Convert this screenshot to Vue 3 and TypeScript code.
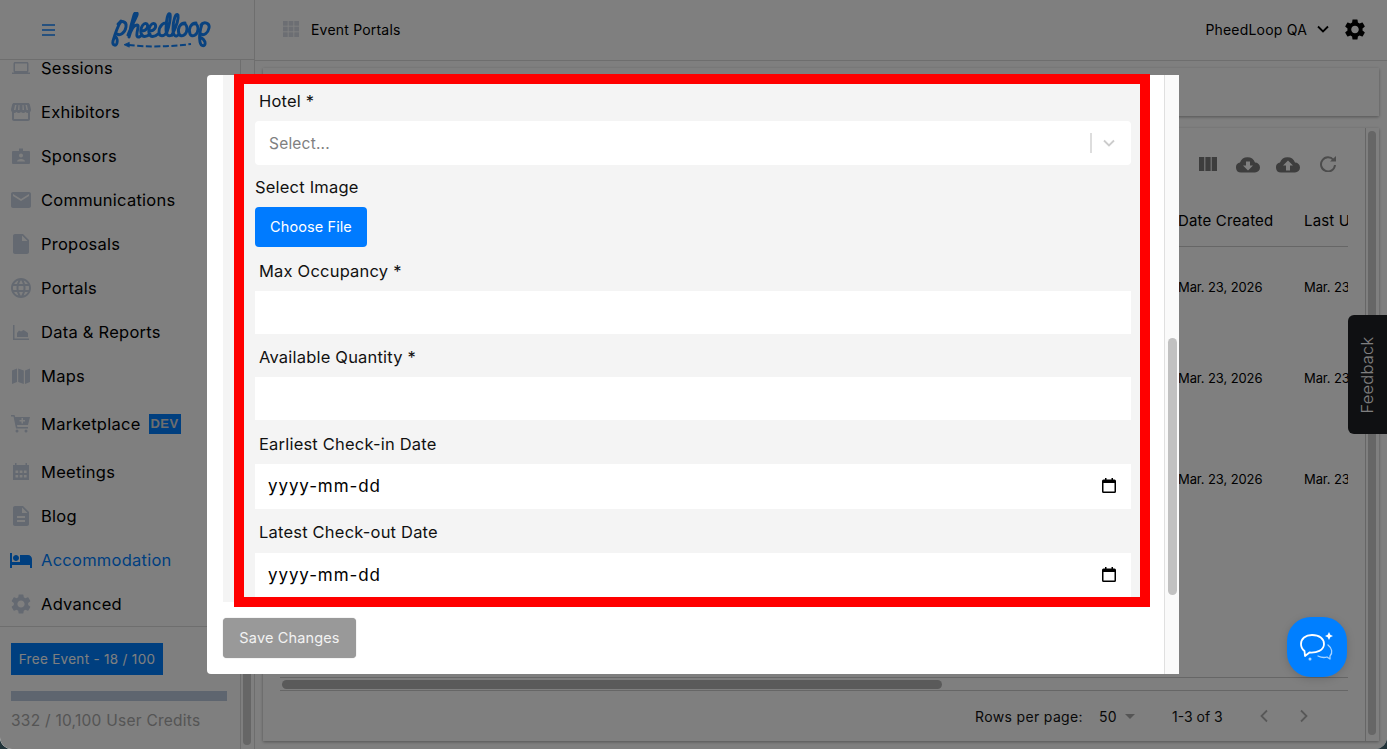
<script setup lang="ts">
interface NavItem { label: string; icon: string; vb?: string; cls?: string; active?: boolean; dev?: boolean; }
const M = '0 0 24 24';
const nav: NavItem[] = [
  { label: 'Sessions', vb: '-4 -4 32 32', icon: 'M20 18c1.100 0 1.990-.9 1.990-2L22 6c0-1.100-.9-2-2-2H4c-1.100 0-2 .9-2 2v10c0 1.100.9 2 2 2H0v2h24v-2h-4zM4 6h16v10H4V6z' },
  { label: 'Exhibitors', vb: M, icon: 'M21.900 8.890l-1.050-4.370c-.22-.9-1-1.520-1.910-1.520H5.050c-.9 0-1.690.63-1.900 1.520L2.100 8.890c-.24 1.020-.02 2.060.62 2.880.08.11.19.19.28.29V19c0 1.100.9 2 2 2h14c1.100 0 2-.9 2-2v-6.940c.09-.09.2-.18.28-.28.64-.82.87-1.870.62-2.890zM5 19v-6.030c.08.01.15.03.22.03.87 0 1.660-.36 2.240-.95.6.6 1.400.95 2.310.95.87 0 1.650-.36 2.230-.93.59.57 1.390.93 2.290.93.84 0 1.640-.35 2.240-.95.58.59 1.370.95 2.240.95.08 0 .15-.02.23-.03V19H5zM6 5L5 10h1.500L7.500 5zM9.500 5L9 10h1.500V5zM13.500 5v5H15l-.5-5zM16.500 5l1 5H19l-1-5z' },
  { label: 'Sponsors', icon: 'M2 5h6V2.500h4V5h6a1 1 0 0 1 1 1v11a1 1 0 0 1-1 1H2a1 1 0 0 1-1-1V6a1 1 0 0 1 1-1z M10 7.500a2 2 0 1 0 0 4 2 2 0 0 0 0-4z M6 15.500h8c0-3.500-8-3.500-8 0z' },
  { label: 'Communications', vb: M, icon: 'M20 4H4c-1.100 0-1.990.9-1.990 2L2 18c0 1.100.9 2 2 2h16c1.100 0 2-.9 2-2V6c0-1.100-.9-2-2-2zm0 4l-8 5-8-5V6l8 5 8-5v2z' },
  { label: 'Proposals', vb: M, icon: 'M6 2c-1.100 0-1.990.9-1.990 2L4 20c0 1.100.89 2 1.990 2H18c1.100 0 2-.9 2-2V8l-6-6H6zm7 7V3.500L18.500 9H13z' },
  { label: 'Portals', vb: M, icon: 'M11.990 2C6.470 2 2 6.480 2 12s4.470 10 9.990 10C17.520 22 22 17.520 22 12S17.520 2 11.990 2zm6.930 6h-2.950c-.32-1.250-.78-2.450-1.380-3.560 1.840.63 3.370 1.910 4.330 3.560zM12 4.040c.83 1.200 1.480 2.530 1.910 3.960h-3.820c.43-1.430 1.080-2.760 1.910-3.960zM4.260 14C4.100 13.360 4 12.690 4 12s.1-1.360.26-2h3.380c-.08.66-.14 1.320-.14 2 0 .68.06 1.340.14 2H4.260zm.82 2h2.950c.32 1.250.78 2.450 1.380 3.560-1.840-.63-3.370-1.900-4.330-3.560zm2.950-8H5.080c.96-1.660 2.490-2.930 4.330-3.560C8.810 5.550 8.350 6.750 8.030 8zM12 19.960c-.83-1.200-1.480-2.530-1.910-3.960h3.820c-.43 1.430-1.080 2.760-1.910 3.960zM14.340 14H9.660c-.09-.66-.16-1.320-.16-2 0-.68.07-1.350.16-2h4.680c.09.65.16 1.320.16 2 0 .68-.07 1.340-.16 2zm.25 5.560c.6-1.110 1.060-2.310 1.380-3.560h2.950c-.96 1.650-2.490 2.930-4.330 3.560zM16.360 14c.08-.66.14-1.320.14-2 0-.68-.06-1.340-.14-2h3.380c.16.64.26 1.310.26 2s-.1 1.360-.26 2h-3.380z' },
  { label: 'Data & Reports', icon: 'M2 3h1.500v13.500H18V18H2z M6 15v-4l2-2.500 2 1 2.500-1.500L15 9.500l2 1.500v4z' },
  { label: 'Maps', icon: 'M1 4.500l5-2v13.500l-5 2z M7.200 2.500l5.600 2V18l-5.600-2z M14 4.500l5-2V16l-5 2z' },
  { label: 'Marketplace', icon: 'M0 1h3.500l.7 2H19l-2 8H6l.4 2H17v1.500H5L2.500 2.500H0z M6 15.500a1.500 1.500 0 1 0 0 3 1.500 1.500 0 0 0 0-3z M15 15.500a1.500 1.500 0 1 0 0 3 1.500 1.500 0 0 0 0-3z M10.500 4v2h-2v1.500h2v2H12v-2h2V6h-2V4z', dev: true, cls: 'gap-a' },
  { label: 'Meetings', icon: 'M4 1h1.500v2h9V1H16v2h2v15H2V3h2z M4.500 8.500v2.500h2.700V8.500z M8.700 8.500v2.500h2.700V8.500z M12.900 8.500v2.500h2.700V8.500z M4.500 13v2.500h2.700V13z M8.700 13v2.500h2.700V13z M12.900 13v2.500h2.700V13z', cls: 'gap-b' },
  { label: 'Blog', vb: M, icon: 'M14 2H6c-1.100 0-1.990.9-1.990 2L4 20c0 1.100.89 2 1.990 2H18c1.100 0 2-.9 2-2V8l-6-6zm2 16H8v-2h8v2zm0-4H8v-2h8v2zm-3-5V3.500L18.500 9H13z' },
  { label: 'Accommodation', vb: M, icon: 'M7 13c1.660 0 3-1.340 3-3S8.660 7 7 7s-3 1.340-3 3 1.340 3 3 3zm12-6h-8v7H3V5H1v15h2v-3h18v3h2v-9c0-2.210-1.790-4-4-4z', active: true },
  { label: 'Advanced', vb: M, icon: 'M19.140 12.940c.04-.3.06-.61.06-.94 0-.32-.02-.64-.07-.94l2.030-1.580a.49.49 0 0 0 .12-.61l-1.920-3.320a.488.488 0 0 0-.59-.22l-2.390.96c-.5-.38-1.030-.7-1.620-.94l-.36-2.540a.484.484 0 0 0-.48-.41h-3.840c-.24 0-.43.17-.47.41l-.36 2.540c-.59.24-1.130.57-1.620.94l-2.390-.96c-.22-.08-.47 0-.59.22L2.740 8.870c-.12.21-.08.47.12.61l2.030 1.580c-.05.3-.09.63-.09.94s.02.64.07.94l-2.030 1.580a.49.49 0 0 0-.12.61l1.920 3.320c.12.22.37.29.59.22l2.390-.96c.5.38 1.030.7 1.620.94l.36 2.540c.05.24.24.41.48.41h3.840c.24 0 .44-.17.47-.41l.36-2.540c.59-.24 1.130-.56 1.620-.94l2.390.96c.22.08.47 0 .59-.22l1.920-3.320c.12-.22.07-.47-.12-.61l-2.010-1.580zM12 15.600c-1.980 0-3.600-1.620-3.600-3.600s1.620-3.600 3.600-3.600 3.600 1.620 3.600 3.600-1.620 3.600-3.600 3.600z' },
];
const gear = nav[nav.length - 1].icon;
const rows = ['row-a', 'row-b', 'row-c'];
const fields = ['Max Occupancy *', 'Available Quantity *'];
const dates = ['Earliest Check-in Date', 'Latest Check-out Date'];
</script>

<template>
  <div class="page">
    <aside class="side">
      <div class="brand">
        <svg class="burger" viewBox="0 0 13 12" width="13" height="12"><path d="M0 1h13M0 6h13M0 11h13" stroke="#1284ff" stroke-width="1.500" /></svg>
        <svg class="logo" viewBox="0 0 102 36" width="102" height="36" fill="none" stroke="#1284ff" stroke-linecap="round" stroke-linejoin="round">
          <g stroke-width="2.900">
            <path d="M12 9C9 14 6 22 4 29c-1 4 3 6 4 2 1-4-1-6-2-7" />
            <path d="M9 12c3-4 9-3 8 3-1 6-6 9-9 7" />
            <path d="M19 23c3-8 8-17 9-20 1-3-2-3-3 0-2 6-4 14-5 22 2-7 5-12 8-12 3 0-1 7 0 11 1 2 3 1 5-1" />
            <path d="M33 19c4 0 7-4 5-7-3-2-7 3-6 9 1 5 6 4 9 1" />
            <path d="M41 19c4 0 7-4 5-7-3-2-7 3-6 9 1 5 6 4 9 1" />
            <path d="M59 12c-4-3-9 2-9 8 0 5 5 5 8 0 2-5 4-15 3-18-2-2-4 6-4 15 0 6 2 8 6 6" />
            <path d="M63 23c3-6 7-16 6-20-2-3-5 5-5 14 0 7 3 9 6 5" />
            <path d="M76 11c-5 0-8 6-6 11 2 4 8 1 8-5 0-4-2-6-4-5" />
            <path d="M87 11c-5 0-8 6-6 11 2 4 8 1 8-5 0-4-2-6-4-5" />
            <path d="M93 12c-2 6-3 13-2 18 1 5 6 5 5 0-1-3-3-4-5-5" />
            <path d="M92 13c3-4 9-2 8 3-1 5-5 8-8 6" />
          </g>
          <path d="M20 33c16 2 40 2 62-1" stroke-width="2" stroke-dasharray="6 2.500" stroke-linecap="butt" />
          <path d="M20 30.500l-5 2.200 5 2.300z" fill="#1284ff" stroke-width=".8" />
        </svg>
      </div>
      <div class="side-body">
        <div class="side-col">
          <div class="nav-wrap">
            <nav class="nav">
              <a v-for="n in nav" :key="n.label" class="nav-item" :class="[n.cls, { active: n.active }]">
                <svg class="nav-icon" :viewBox="n.vb || '-2 -2 24 24'" width="24" height="24"><path :d="n.icon" fill-rule="evenodd" /></svg>
                <span class="nav-label">{{ n.label }}</span>
                <span v-if="n.dev" class="dev">DEV</span>
              </a>
            </nav>
          </div>
          <div class="plan">
            <span class="plan-badge">Free Event - 18 / 100</span>
            <div class="plan-bar"></div>
            <div class="plan-credits">332 / 10,100 User Credits</div>
          </div>
        </div>
        <div class="track"><i class="track-thumb"></i></div>
      </div>
    </aside>

    <div class="main">
      <header class="top">
        <svg class="grid-ico" viewBox="0 0 17 17" width="16" height="16"><g fill="#d8dde6"><rect v-for="i in 9" :key="i" :x="((i-1)%3)*6" :y="Math.floor((i-1)/3)*6" width="5" height="5" /></g></svg>
        <span class="crumb">Event Portals</span>
        <span class="org">PheedLoop QA</span>
        <svg class="chev" viewBox="0 0 12 8" width="12" height="8"><path d="M1 1.500l5 5 5-5" fill="none" stroke="#000" stroke-width="1.800" /></svg>
        <svg class="gear" viewBox="2.500 2 19 20" width="20" height="21"><path fill-rule="evenodd" :d="gear" /></svg>
      </header>
      <div class="content">
        <div class="card-top"></div>
        <div class="card-wrap">
          <section class="card">
            <div class="tools">
              <svg viewBox="0 0 18 14" width="18" height="14"><path d="M0 0h5.300v14H0zM6.350 0h5.300v14h-5.300zM12.700 0H18v14h-5.300z" fill="#7a7a7a" /></svg>
              <svg class="t2" viewBox="0 0 24 16" width="24" height="17"><path fill="#7a7a7a" fill-rule="evenodd" d="M5 16a5 5 0 0 1-1-9.900A8 8 0 0 1 19 6a5 5 0 0 1 0 10z M10 5v4H7l5 5 5-5h-3V5z" /></svg>
              <svg class="t3" viewBox="0 0 24 16" width="24" height="17"><path fill="#7a7a7a" fill-rule="evenodd" d="M5 16a5 5 0 0 1-1-9.900A8 8 0 0 1 19 6a5 5 0 0 1 0 10z M12 4L7 9h3v5h4V9h3z" /></svg>
              <svg class="t4" viewBox="0 0 16 16" width="16" height="16"><path fill="none" stroke="#999" stroke-width="2" d="M13.500 4A7 7 0 1 0 15 9" /><path fill="#999" d="M10 5.500h6V0z" /></svg>
            </div>
            <div class="thead"><span class="c1">Date Created</span><span class="c2">Last Updated</span></div>
            <div v-for="r in rows" :key="r" class="trow" :class="r"><span class="c1">Mar. 23, 2026</span><span class="c2">Mar. 23, 2026</span></div>
            <div class="hscroll"><i class="hthumb"></i></div>
            <div class="pager">
              <span>Rows per page:</span>
              <span class="per">50</span><i class="caret"></i>
              <span class="count">1-3 of 3</span>
              <svg viewBox="0 0 10 14" width="10" height="14"><path d="M8 1.500L2.500 7 8 12.500" fill="none" stroke="#b0b0b0" stroke-width="1.800" /></svg>
              <svg class="next" viewBox="0 0 10 14" width="10" height="14"><path d="M2 1.500L7.500 7 2 12.500" fill="none" stroke="#b0b0b0" stroke-width="1.800" /></svg>
            </div>
          </section>
          <div class="page-track"><i class="page-thumb"></i></div>
        </div>
      </div>
    </div>

    <div class="feedback"><span>Feedback</span></div>
    <div class="backdrop"></div>

    <div class="modal">
      <div class="modal-body">
        <form class="form" @submit.prevent>
          <label class="lbl inset first">Hotel *</label>
          <div class="select">
            <span class="ph">Select...</span>
            <i class="sep"></i>
            <svg viewBox="0 0 12 8" width="12" height="8"><path d="M1 1.500l5 5 5-5" fill="none" stroke="#ccc" stroke-width="1.800" /></svg>
          </div>
          <label class="lbl image">Select Image</label>
          <button type="button" class="choose">Choose File</button>
          <template v-for="f in fields" :key="f">
            <label class="lbl inset">{{ f }}</label>
            <div class="input"></div>
          </template>
          <template v-for="d in dates" :key="d">
            <label class="lbl inset date-l">{{ d }}</label>
            <div class="input date">
              <span>yyyy-mm-dd</span>
              <svg viewBox="0 0 14 15" width="14" height="15"><path fill-rule="evenodd" d="M3 0h1.500v1.500h5V0H11v1.500h1.500A1.500 1.500 0 0 1 14 3v10.500a1.500 1.500 0 0 1-1.500 1.500h-11A1.500 1.500 0 0 1 0 13.500V3a1.500 1.500 0 0 1 1.500-1.500H3z M1.500 5v8.500h11V5z" /></svg>
            </div>
          </template>
        </form>
        <div class="modal-track"><i class="modal-thumb"></i></div>
      </div>
      <div class="modal-foot"><button type="button" class="save">Save Changes</button></div>
      <div class="mark"></div>
    </div>

    <button type="button" class="chat" aria-label="Chat">
      <svg viewBox="0 0 36 32" width="36" height="32" fill="none" stroke="#fff" stroke-linejoin="round" stroke-linecap="round">
        <path stroke-width="1.800" d="M13 4C6.500 4 2 7.500 2 13c0 3 1.500 5.500 3.500 7l.5 5 4.500-3.500c7 .5 14.500-2 14.500-8.500 0-5.500-4.500-9-12-9z" />
        <path stroke-width="1.300" stroke="#a9d4ff" d="M29 14c4 3 5 8 2 11v3l-3-2c-3 1-6 .5-9-1" />
        <path stroke="none" fill="#fff" d="M30 1l1.300 2.700L34 5l-2.700 1.300L30 9l-1.300-2.700L26 5l2.700-1.300z" />
        <circle cx="11" cy="28" r="1.500" fill="#a9d4ff" stroke="none" />
      </svg>
    </button>
  </div>
</template>

<style>
html, body { margin: 0; padding: 0; background: #22343a; overflow: hidden; }
</style>

<style scoped>
.page { position: relative; width: 1387px; height: 749px; display: flex; overflow: hidden; background: #fff; font-family: "Inter", "Open Sans", sans-serif; color: #000; border-radius: 0 0 12px 12px; }
.side { width: 255px; height: 749px; display: flex; flex-direction: column; flex: none; box-sizing: border-box; border-right: 1px solid #ddd; background: #fff; }
.brand { height: 59px; flex: none; display: flex; align-items: center; border-bottom: 1px solid #ddd; }
.burger { margin-left: 42px; }
.logo { margin-left: 54px; }
.side-body { flex: 1; min-height: 0; display: flex; }
.side-col { width: 240px; flex: none; display: flex; flex-direction: column; }
.nav-wrap { flex: 1; min-height: 0; overflow: hidden; }
.nav { margin-top: -14px; }
.nav-item { display: flex; align-items: center; height: 44px; padding-left: 9px; }
.nav-icon { width: 24px; height: 24px; fill: #c8d2e2; flex: none; }
.nav-label { margin-left: 8px; font-size: 16.500px; line-height: 16px; letter-spacing: .25px; }
.gap-a, .gap-b { margin-top: 4px; }
.active .nav-icon { fill: #007fff; }
.active .nav-label { color: #007fff; }
.dev { margin-left: 8px; width: 32px; height: 20px; background: #007fff; color: #ddd; font: 700 13px/20px "Liberation Sans", sans-serif; text-align: center; letter-spacing: .5px; }
.track { width: 14px; flex: none; border-left: 1px solid #ddd; box-sizing: border-box; position: relative; }
.track-thumb { display: block; position: absolute; left: 2px; width: 8px; top: 300px; bottom: 4px; background: #ccc; border-radius: 4px; }
.plan { height: 123px; flex: none; box-sizing: border-box; border-top: 1px solid #ddd; padding: 16px 11px 0; }
.plan-badge { display: block; width: 152px; height: 32px; background: #007fff; color: #fff; font-size: 13.500px; line-height: 32px; text-align: center; letter-spacing: .3px; }
.plan-bar { height: 10px; background: #bccadf; margin-top: 16px; width: 216px; }
.plan-credits { margin-top: 10px; font-size: 15.500px; line-height: 19px; color: #aaa; letter-spacing: .25px; white-space: nowrap; }
.main { flex: 1; min-width: 0; display: flex; flex-direction: column; }
.top { height: 58px; flex: none; display: flex; align-items: center; border-bottom: 1px solid #ddd; padding: 0 0 2px 28px; margin-bottom: -1px; font-size: 14px; }
.crumb { margin-left: 12px; letter-spacing: .2px; }
.org { margin-left: auto; letter-spacing: .2px; }
.chev { margin-left: 10px; }
.gear { margin: 0 22px 0 16px; }
.content { flex: 1; min-height: 0; padding: 8px; display: flex; flex-direction: column; gap: 12px; }
.card-top { height: 48px; flex: none; background: #fff; box-shadow: 0 1px 3px rgba(0,0,0,.35); }
.card-wrap { flex: 1; min-height: 0; display: flex; background: #fff; box-shadow: 0 1px 3px rgba(0,0,0,.35); }
.card { flex: 1; min-width: 0; display: flex; flex-direction: column; padding-right: 17px; overflow: hidden; }
.tools { height: 72px; flex: none; display: flex; align-items: center; margin-left: 936px; width: 170px; }
.t2 { margin-left: 19px; }
.t3 { margin-left: 16px; }
.t4 { margin-left: 20px; }
.thead, .trow { display: flex; flex: none; white-space: nowrap; overflow: hidden; margin-left: 17px; padding-left: 898px; align-items: center; }
.thead { height: 40px; padding-bottom: 6px; font-size: 15px; letter-spacing: .17px; border-bottom: 1px solid #ccc; margin-bottom: -1px; }
.trow { font-size: 13px; letter-spacing: -.1px; }
.row-a { height: 82px; }
.row-b { height: 100px; }
.row-c { height: 102px; }
.c1 { width: 126px; flex: none; }
.c2 { flex: none; }
.hscroll { margin-top: auto; margin-left: 17px; height: 14px; flex: none; box-sizing: border-box; position: relative; border-top: 1px solid #ccc; border-bottom: 1px solid #ccc; }
.hthumb { position: absolute; left: 2px; width: 660px; height: 9px; top: 2px; background: #b4b4b4; border-radius: 5px; }
.pager { height: 50px; flex: none; display: flex; align-items: center; padding-left: 712px; font-size: 14px; letter-spacing: .35px; color: #111; }
.per { margin-left: 16px; }
.caret { width: 0; height: 0; border: 5px solid transparent; border-top-color: #aaa; border-bottom: 0; margin-left: 8px; }
.count { margin-left: 37px; margin-right: 36px; letter-spacing: 0; }
.next { margin-left: 30px; }
.page-track { width: 14px; flex: none; border-left: 1px solid #ccc; box-sizing: border-box; padding: 3px 3px 6px 2px; }
.page-thumb { display: block; height: 100%; background: #ccc; border-radius: 5px; }
.feedback { position: absolute; right: 0; top: 315px; width: 39px; height: 119px; background: #1e2024; border-radius: 6px 0 0 6px; display: flex; align-items: center; justify-content: center; }
.feedback span { transform: rotate(-90deg); color: #fff; font-size: 16.500px; font-weight: 300; letter-spacing: .2px; white-space: nowrap; }
.backdrop { position: absolute; inset: 0; background: rgba(0,0,0,.5); }
.modal { position: absolute; left: 207px; top: 75px; width: 972px; height: 599px; background: #fff; border-radius: 4px 0 0 4px; display: flex; flex-direction: column; }
.modal-body { flex: none; height: 528px; display: flex; padding-left: 16px; }
.form { flex: 1; min-width: 0; height: 527px; overflow: hidden; background: #f4f4f4; margin-right: 16px; padding: 0 17px 0 32px; box-sizing: border-box; }
.modal-track { width: 15px; flex: none; background: #fafafa; border-left: 1px solid #e0e0e0; box-sizing: border-box; height: 599px; position: relative; }
.modal-thumb { position: absolute; left: 3px; width: 9px; top: 263px; height: 257px; background: #c1c1c1; border-radius: 5px; }
.lbl { display: block; font-size: 16.500px; color: #111; line-height: 20px; letter-spacing: .2px; }
.inset { padding-left: 4px; }
.first { padding-top: 16px; }
.select { height: 44px; margin-top: 10px; background: #fff; border-radius: 4px; display: flex; align-items: center; padding: 0 16px 0 14px; }
.ph { font-size: 15.500px; color: #808080; flex: 1; letter-spacing: .2px; }
.sep { width: 2px; height: 20px; background: #ddd; margin-right: 11px; }
.image { margin-top: 12px; }
.choose { display: block; width: 112px; height: 40px; margin: 10px 0 0; border: 0; border-radius: 4px; background: #007bff; color: #fff; font: 14.500px/40px "Inter", sans-serif; padding: 0; letter-spacing: .1px; }
.choose + .lbl { margin-top: 14px; }
.lbl + .input { margin-top: 10px; }
.input { height: 43px; background: #fff; }
.input + .lbl { margin-top: 13px; }
.input + .date-l { margin-top: 14px; }
.date { height: 45px; box-sizing: border-box; display: flex; align-items: center; justify-content: space-between; padding: 0 15px 2px 13px; font-size: 17px; color: #000; letter-spacing: .9px; }
.date-l + .date { margin-top: 10px; }
.date + .date-l { margin-top: 13px; }
.date + .date-l + .date { margin-top: 11px; }
.modal-foot { flex: none; padding: 15px 0 0 16px; }
.save { display: block; width: 133px; height: 40px; border: 0; border-radius: 4px; background: #999; color: #f2f2f2; font: 14.500px/40px "Inter", sans-serif; letter-spacing: .15px; padding: 0; box-shadow: 0 0 1px rgba(0,0,0,.4); }
.mark { position: absolute; left: 27px; top: -1px; width: 916px; height: 533px; border: 10px solid #f00; box-sizing: border-box; pointer-events: none; }
.chat { position: absolute; left: 1287px; top: 617px; width: 60px; height: 60px; border: 0; border-radius: 24px; background: #007fff; padding: 0; display: flex; align-items: center; justify-content: center; box-shadow: 0 2px 8px rgba(0,0,0,.15); }
</style>
